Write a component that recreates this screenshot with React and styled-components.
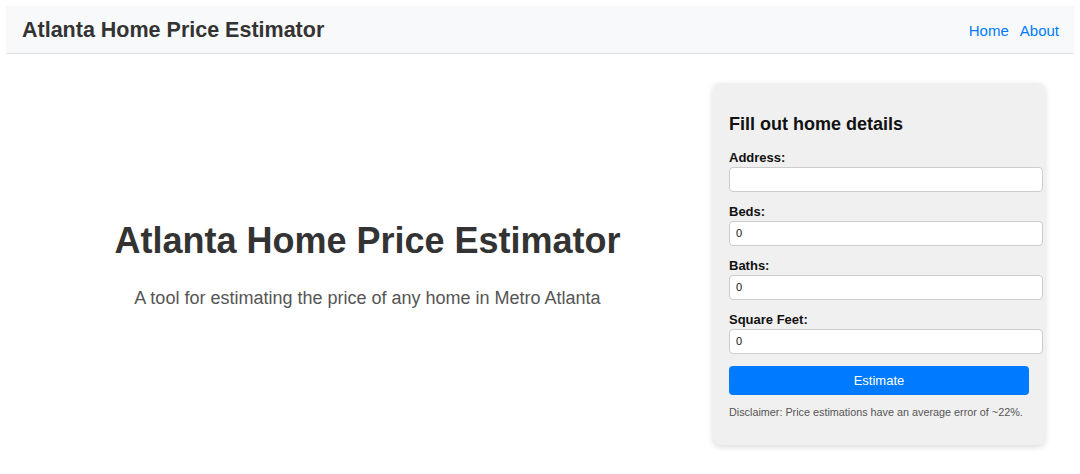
import React from "react";
import styled, { createGlobalStyle } from "styled-components";

const Global = createGlobalStyle`
  html, body { margin: 0; padding: 0; background: #fff; }
  body { font-family: "Liberation Sans", Arial, Helvetica, sans-serif; }
  * { box-sizing: content-box; }
`;

const Page = styled.div`
  padding: 6px;
`;

const Navbar = styled.header`
  display: flex;
  align-items: center;
  justify-content: space-between;
  height: 46px;
  padding: 1px 15px 0 16px;
  background: #f8f9fa;
  border-bottom: 1px solid #dee2e6;
`;

const Brand = styled.div`
  font-size: 21.5px;
  font-weight: bold;
  color: #333;
`;

const NavLinks = styled.nav`
  display: flex;
  gap: 11px;
`;

const NavLink = styled.a`
  color: #007bff;
  font-size: 15px;
  text-decoration: none;
`;

const Main = styled.main`
  display: flex;
  align-items: center;
  padding: 29px 29px 0 16px;
`;

const Hero = styled.section`
  flex: 1;
  text-align: center;
`;

const HeroTitle = styled.h1`
  margin: 0 0 26px;
  font-size: 36px;
  font-weight: bold;
  color: #333;
`;

const HeroText = styled.p`
  margin: 0;
  font-size: 18px;
  color: #555;
`;

const Card = styled.form`
  width: 300px;
  padding: 16px;
  background: #f0f0f0;
  border-radius: 8px;
  box-shadow: 0 2px 6px rgba(0, 0, 0, 0.15);
`;

const CardTitle = styled.h2`
  margin: 15px 0 15px;
  font-size: 18px;
  font-weight: bold;
  color: #111;
`;

const Field = styled.div`
  margin-bottom: 12px;
`;

const Label = styled.label`
  display: block;
  margin-bottom: 2px;
  font-size: 13px;
  line-height: 15px;
  font-weight: bold;
  color: #111;
`;

const Input = styled.input`
  display: block;
  width: 100%;
  padding: 4px 6px;
  font-family: inherit;
  font-size: 11px;
  line-height: 15px;
  color: #111;
  background: #fff;
  border: 1px solid #ccc;
  border-radius: 4px;
  outline: none;
`;

const Button = styled.button`
  display: block;
  width: 300px;
  height: 29px;
  margin-top: 11px;
  padding: 0;
  font-family: inherit;
  font-size: 13px;
  color: #fff;
  background: #007bff;
  border: none;
  border-radius: 4px;
  cursor: pointer;
`;

const Disclaimer = styled.p`
  margin: 10px 0 10px;
  font-size: 10.8px;
  line-height: 14px;
  color: #555;
`;

const fields = [
  { label: "Address:", value: "" },
  { label: "Beds:", value: "0" },
  { label: "Baths:", value: "0" },
  { label: "Square Feet:", value: "0" },
];

export default function App() {
  return (
    <>
      <Global />
      <Page>
        <Navbar>
          <Brand>Atlanta Home Price Estimator</Brand>
          <NavLinks>
            <NavLink href="#">Home</NavLink>
            <NavLink href="#">About</NavLink>
          </NavLinks>
        </Navbar>
        <Main>
          <Hero>
            <HeroTitle>Atlanta Home Price Estimator</HeroTitle>
            <HeroText>A tool for estimating the price of any home in Metro Atlanta</HeroText>
          </Hero>
          <Card onSubmit={(e) => e.preventDefault()}>
            <CardTitle>Fill out home details</CardTitle>
            {fields.map((f) => (
              <Field key={f.label}>
                <Label>{f.label}</Label>
                <Input type="text" defaultValue={f.value} />
              </Field>
            ))}
            <Button type="submit">Estimate</Button>
            <Disclaimer>Disclaimer: Price estimations have an average error of ~22%.</Disclaimer>
          </Card>
        </Main>
      </Page>
    </>
  );
}
